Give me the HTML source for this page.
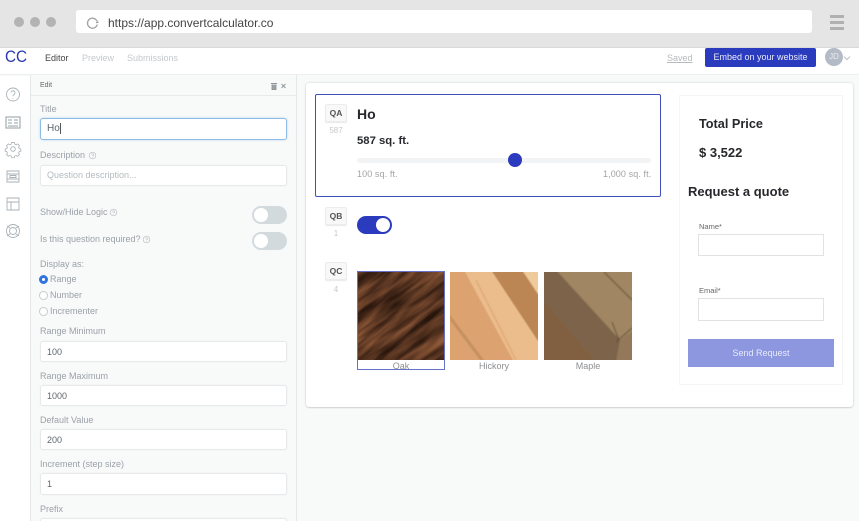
<!DOCTYPE html>
<html><head><meta charset="utf-8"><style>
*{box-sizing:border-box}
html,body{margin:0;padding:0;width:859px;height:521px;overflow:hidden;background:#f8f9f9}
body{font-family:"Liberation Sans",sans-serif;position:relative}
#r{position:absolute;left:0;top:0;width:859px;height:521px;overflow:hidden;filter:blur(.35px)}
#r div,#r svg{position:absolute}
.t{white-space:nowrap;line-height:12px}
.l{left:40px;font-size:9px;color:#9aa2a8}
.i{left:40px;width:247px;background:#fff;border:1px solid #e6e9eb;box-shadow:0 0 1px #e6e9eb;border-radius:3px;font-size:9px;color:#5f666b;padding-left:6px}
.tg{left:252px;width:35px;height:18px;border-radius:9px;background:#d3dade}
.tg div{left:2px;top:2px;width:14px;height:14px;border-radius:50%;background:#fff}
.rd{left:39px;width:9px;height:9px;border-radius:50%;border:1px solid #c6cbce;background:#fff}
.bd{left:325px;width:22px;height:18px;background:#f8f8f8;border:1px solid #ececec;border-radius:2px;box-shadow:0 1px 1px #e8e8e8;font-size:8.5px;font-weight:bold;color:#555;text-align:center;line-height:16px}
.ct{left:325px;width:22px;text-align:center;font-size:8px;color:#c5c8ca}
.cap{font-size:9px;color:#8c8f92;text-align:center;width:88px;top:360px}
.q{font-weight:bold;color:#26282b}
</style></head><body><div id="r">

<div style="left:0;top:0;width:859px;height:48px;background:#e5e5e5;border-bottom:1px solid #d9d9d9"></div>
<div style="left:14px;top:17px;width:10px;height:10px;border-radius:50%;background:#b3b3b3"></div>
<div style="left:30px;top:17px;width:10px;height:10px;border-radius:50%;background:#b3b3b3"></div>
<div style="left:46px;top:17px;width:10px;height:10px;border-radius:50%;background:#b3b3b3"></div>
<div style="left:76px;top:10px;width:736px;height:23px;background:#fff;border-radius:3px"></div>
<svg style="left:85px;top:16px" width="15" height="15" viewBox="0 0 15 15" fill="none" stroke="#a3a3a3" stroke-width="1.300"><path d="M12.300 8.500A5 5 0 1 1 10.500 3.200L12.500 5.500"/><path d="M13.500 6.200L11 6.600"/></svg>
<div class="t" style="left:108px;top:17px;font-size:12px;color:#444">https://app.convertcalculator.co</div>
<div style="left:830px;top:15px;width:14px;height:3px;background:#b0b0b0"></div>
<div style="left:830px;top:21px;width:14px;height:3px;background:#b0b0b0"></div>
<div style="left:830px;top:27px;width:14px;height:3px;background:#b0b0b0"></div>

<div style="left:0;top:48px;width:859px;height:27px;background:#fff;border-bottom:1px solid #eceeef"></div>
<div class="t" style="left:5px;top:48px;font-size:17px;line-height:17px;color:#2b3ab0;transform:scaleX(.9);transform-origin:left top">CC</div>
<div class="t" style="left:45px;top:52px;font-size:9px;color:#444">Editor</div>
<div class="t" style="left:82px;top:52px;font-size:9px;color:#c5c9cc">Preview</div>
<div class="t" style="left:127px;top:52px;font-size:9px;color:#c5c9cc">Submissions</div>
<div class="t" style="left:667px;top:52px;font-size:9px;color:#b5babd;text-decoration:underline">Saved</div>
<div class="t" style="left:705px;top:48px;width:111px;height:19px;background:#2a3bbd;border-radius:2px;color:#e8ebfa;font-size:9px;line-height:19px;text-align:center">Embed on your website</div>
<div class="t" style="left:825px;top:48px;width:18px;height:18px;border-radius:50%;background:#b4bbc7;color:#e8eaee;font-size:8px;line-height:17px;text-align:center">JD</div>
<svg style="left:843px;top:55px" width="8" height="6" viewBox="0 0 8 6" fill="none" stroke="#a9aeb2" stroke-width=".8"><path d="M1 1.500L4 4.500L7 1.500"/></svg>

<div style="left:0;top:76px;width:30px;height:445px;background:#fff"></div>
<svg style="left:0;top:76px" width="30" height="170" fill="none" stroke="#abb2b6" stroke-width=".9"><circle cx="13" cy="18.500" r="6.500"/><path d="M11 16.500a2 2 0 1 1 3 2c-.8.500-1 1-1 1.800M13 22v.8"/><path d="M6 41h14v11H6zM8 44h4M14 44h4M8 47h4M14 47h4M8 50h10" stroke-width="1.300"/><circle cx="13" cy="73" r="2.300"/><path d="M11.500 66.500h3l.4 1.800 1.700.8 1.600-1 2 2-1 1.600.7 1.600 1.800.4v2.600l-1.800.4-.7 1.600 1 1.600-2 2-1.600-1-1.700.7-.4 1.900h-3l-.4-1.900-1.700-.7-1.600 1-2-2 1-1.600-.7-1.600-1.800-.4v-2.600l1.800-.4.700-1.600-1-1.600 2-2 1.600 1 1.700-.8z" transform="translate(1.300 6.600) scale(.9)"/><path d="M7 95h12v11H7zM7 98h12M7 103h12M10 99.500h6v2h-6z"/><path d="M7 122h12v12H7zM7 126h12M11 126v8"/><circle cx="13" cy="155" r="6.500"/><circle cx="13" cy="155" r="3.500"/><path d="M7 150l3 2M19 150l-3 2M7 160l3-2M19 160l-3-2"/></svg>

<div style="left:30px;top:75px;width:267px;height:446px;background:#f8f9f9;border-left:1px solid #e4e8ea;border-right:1px solid #e4e8ea"></div>
<div style="left:31px;top:95px;width:265px;height:1px;background:#e8eaec"></div>
<div class="t" style="left:40px;top:80px;font-size:7px;color:#666">Edit</div>
<svg style="left:270px;top:82px" width="16" height="8" fill="none" stroke="#8f9598" stroke-width=".9"><path d="M1 1.500h6M2 2.500v5h4v-5" fill="#9da2a5"/><path d="M11.500 2l4 4M15.500 2l-4 4"/></svg>

<div class="t l" style="top:103px">Title</div>
<div class="i" style="top:118px;height:22px;border:1.500px solid #8dbce6;line-height:20px;box-shadow:0 0 2px #b7d6f0;font-size:10px">Ho<span style="border-left:1px solid #555"></span></div>
<div class="t l" style="top:149px">Description</div>
<svg style="left:88px;top:151px" width="9" height="9" fill="none" stroke="#bcc2c5" stroke-width=".7"><circle cx="4.500" cy="4.500" r="3.300"/><path d="M4.500 6.200v.4M3.400 3.600a1.100 1.100 0 1 1 1.100 1.400v.4"/></svg>
<div class="i" style="top:165px;height:21px;line-height:19px;color:#b4babe">Question description...</div>

<div class="t l" style="top:206px">Show/Hide Logic</div>
<svg style="left:109px;top:208px" width="9" height="9" fill="none" stroke="#bcc2c5" stroke-width=".7"><circle cx="4.500" cy="4.500" r="3.300"/><path d="M4.500 6.200v.4M3.400 3.600a1.100 1.100 0 1 1 1.100 1.400v.4"/></svg>
<div class="tg" style="top:206px"><div></div></div>
<div class="t l" style="top:233px">Is this question required?</div>
<svg style="left:142px;top:235px" width="9" height="9" fill="none" stroke="#bcc2c5" stroke-width=".7"><circle cx="4.500" cy="4.500" r="3.300"/><path d="M4.500 6.200v.4M3.400 3.600a1.100 1.100 0 1 1 1.100 1.400v.4"/></svg>
<div class="tg" style="top:232px"><div></div></div>

<div class="t l" style="top:258px">Display as:</div>
<div class="rd" style="top:275px;border:3px solid #2f74e0"></div>
<div class="t l" style="left:50px;top:273px">Range</div>
<div class="rd" style="top:291px"></div>
<div class="t l" style="left:50px;top:289px">Number</div>
<div class="rd" style="top:307px"></div>
<div class="t l" style="left:50px;top:305px">Incrementer</div>

<div class="t l" style="top:325px">Range Minimum</div>
<div class="i" style="top:341px;height:21px;line-height:20px">100</div>
<div class="t l" style="top:370px">Range Maximum</div>
<div class="i" style="top:385px;height:21px;line-height:20px">1000</div>
<div class="t l" style="top:414px">Default Value</div>
<div class="i" style="top:429px;height:21px;line-height:20px">200</div>
<div class="t l" style="top:458px">Increment (step size)</div>
<div class="i" style="top:473px;height:22px;line-height:20px">1</div>
<div class="t l" style="top:503px">Prefix</div>
<div class="i" style="top:518px;height:21px"></div>

<div style="left:306px;top:83px;width:547px;height:324px;background:#fff;border-radius:3px;box-shadow:0 0 2px #c9cdd0,0 1px 1px #d5d8da"></div>
<div style="left:315px;top:94px;width:346px;height:103px;border:1.300px solid #3f4fb8;border-radius:2px;background:#fff"></div>

<div class="bd" style="top:104px">QA</div>
<div class="t ct" style="top:125px">587</div>
<div class="t q" style="left:357px;top:107px;font-size:14px;line-height:14px">Ho</div>
<div class="t q" style="left:357px;top:135px;font-size:11.300px">587 sq. ft.</div>
<div style="left:357px;top:158px;width:294px;height:5px;border-radius:3px;background:#f2f3f4"></div>
<div style="left:508px;top:153px;width:14px;height:14px;border-radius:50%;background:#2a3bbd"></div>
<div class="t" style="left:357px;top:168px;font-size:9px;color:#a0a3a6;letter-spacing:.1px">100 sq. ft.</div>
<div class="t" style="left:603px;top:168px;font-size:9px;color:#a0a3a6;letter-spacing:.1px">1,000 sq. ft.</div>

<div class="bd" style="top:207px">QB</div>
<div class="t ct" style="top:228px">1</div>
<div style="left:357px;top:216px;width:35px;height:18px;border-radius:9px;background:#2a3bbd"></div>
<div style="left:376px;top:218px;width:14px;height:14px;border-radius:50%;background:#fff"></div>

<div class="bd" style="top:262px">QC</div>
<div class="t ct" style="top:284px">4</div>

<div style="left:357px;top:272px;width:88px;height:88px;overflow:hidden;background:#5b3523">
<svg style="left:-31px;top:-31px;width:150px;height:150px;transform:rotate(-38deg)" width="150" height="150"><defs><filter id="oak" x="0" y="0" width="100%" height="100%" color-interpolation-filters="sRGB"><feTurbulence type="fractalNoise" baseFrequency=".018 .11" numOctaves="3" seed="7"/><feColorMatrix values=".7 0 0 0 .0  .46 0 0 0 -.02  .3 0 0 0 -.02  0 0 0 0 1"/></filter></defs><rect width="150" height="150" filter="url(#oak)"/></svg>
</div>
<svg style="left:450px;top:272px" width="88" height="88" viewBox="0 0 88 88"><defs><filter id="s"><feGaussianBlur stdDeviation=".6"/></filter></defs><g filter="url(#s)"><rect x="-2" y="-2" width="92" height="92" fill="#dca270"/><path d="M14-2H43L90 72V90H64z" fill="#ebbd8d"/><path d="M41-2H72L90 25V72z" fill="#bb8653"/><path d="M72-2H90V25z" fill="#efcb9c"/><path d="M0 48L30 88H34L0 43z" fill="#c4915f"/><path d="M26 8L66 88" stroke="#e2ae7c" fill="none" stroke-width="2"/></g></svg>
<svg style="left:544px;top:272px" width="88" height="88" viewBox="0 0 88 88"><defs><filter id="m"><feGaussianBlur stdDeviation=".7"/></filter></defs><g filter="url(#m)"><rect x="-2" y="-2" width="92" height="92" fill="#a08662"/><path d="M-2-2H12L76 68 72 90H52L-2 26z" fill="#7b634a"/><path d="M-2 26L52 90H-2z" fill="#80603f"/><path d="M76 68L90 58V90H72z" fill="#94785a"/><path d="M72 70L88 56M68 50L75 68M60 0L88 28" stroke="#5f4a35" fill="none"/></g></svg>
<div style="left:357px;top:271px;width:88px;height:99px;border:1px solid #6570c8"></div>
<div class="t cap" style="left:357px">Oak</div>
<div class="t cap" style="left:450px">Hickory</div>
<div class="t cap" style="left:544px">Maple</div>

<div style="left:679px;top:95px;width:164px;height:290px;border:1px solid #f5f5f5"></div>
<div class="t q" style="left:699px;top:118px;font-size:12.700px">Total Price</div>
<div class="t q" style="left:699px;top:147px;font-size:13px">$ 3,522</div>
<div class="t q" style="left:688px;top:186px;font-size:13px">Request a quote</div>
<div class="t" style="left:699px;top:221px;font-size:7.500px;color:#666">Name*</div>
<div style="left:698px;top:234px;width:126px;height:22px;border:1px solid #e2e2e2;background:#fff"></div>
<div class="t" style="left:699px;top:285px;font-size:7.500px;color:#666">Email*</div>
<div style="left:698px;top:298px;width:126px;height:23px;border:1px solid #e2e2e2;background:#fff"></div>
<div class="t" style="left:688px;top:339px;width:146px;height:28px;background:#8c97e0;color:#e8ebfa;font-size:9px;line-height:28px;text-align:center">Send Request</div>

</div></body></html>
